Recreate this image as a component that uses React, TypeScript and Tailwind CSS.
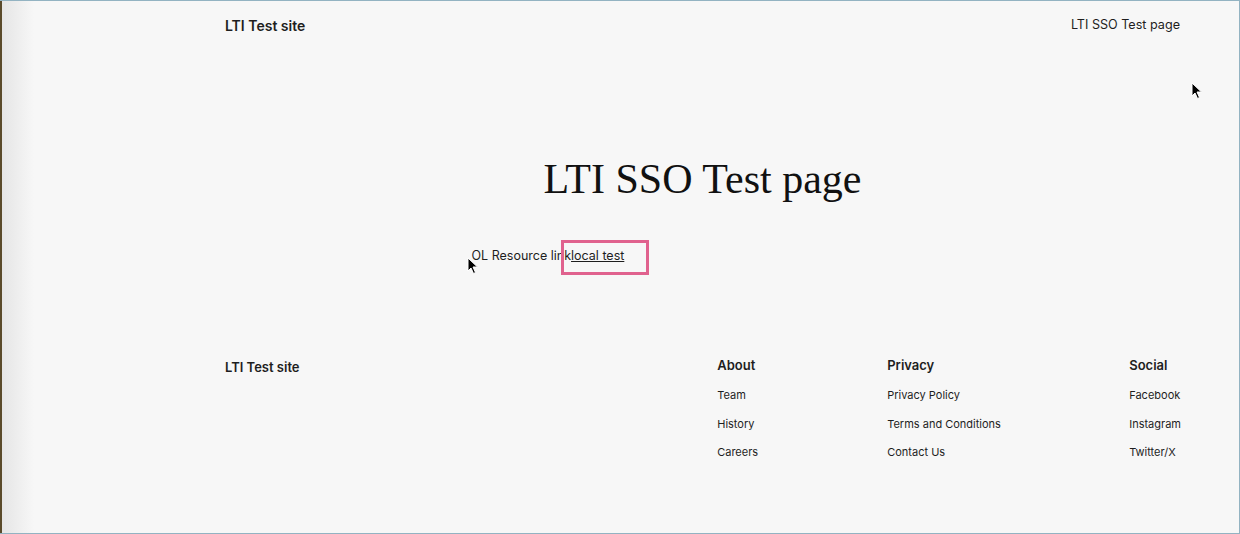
import React from "react";

// Footer link groups
const footerColumns = [
  { title: "About", links: ["Team", "History", "Careers"], width: "w-[170px]" },
  { title: "Privacy", links: ["Privacy Policy", "Terms and Conditions", "Contact Us"], width: "w-[242px]" },
  { title: "Social", links: ["Facebook", "Instagram", "Twitter/X"], width: "w-auto" },
];

const Cursor: React.FC<{ className: string }> = ({ className }) => (
  <svg className={className} width="12" height="18" viewBox="0 0 12 18">
    <path d="M1 1 L1 14 L4 11 L6.5 16.5 L8.5 15.5 L6 10 L10.5 10 Z" fill="#000" stroke="#fff" strokeWidth="1" />
  </svg>
);

const App: React.FC = () => {
  return (
    <div className="relative h-[534px] w-[1240px] overflow-hidden border-t border-r border-b border-[#93b3c2] bg-[#f7f7f7] font-['Inter',sans-serif] text-[#1e1e1e]">
      {/* left window edge shadow */}
      <div className="absolute left-0 top-0 h-full w-[34px] bg-gradient-to-r from-[#e4e4e4] to-[#f7f7f7]" />
      <div className="absolute left-0 top-0 h-full w-[2px] bg-[#5a4a2a]" />

      <div className="relative flex h-full flex-col pl-[227px] pr-[59px]">
        {/* header */}
        <header className="-ml-[2px] flex h-[48px] items-center justify-between">
          <span className="text-[14px] font-semibold">LTI Test site</span>
          <span className="text-[12.6px]">LTI SSO Test page</span>
        </header>

        {/* main */}
        <main className="-ml-[2px] flex flex-col items-center">
          <h1 className="mt-[105px] font-['Liberation_Serif',serif] text-[42px] leading-[50px] text-[#111]">
            LTI SSO Test page
          </h1>
          <div className="mt-[43px] w-[462px] text-[12.5px]">
            <p>
              OL Resource link<a href="#" className="underline">local test</a>
            </p>
          </div>
        </main>

        {/* footer */}
        <footer className="mt-[90px] flex items-start justify-between">
          <span className="-ml-[2px] mt-[2px] text-[13px] font-semibold">LTI Test site</span>
          <div className="-mr-[1px] flex">
            {footerColumns.map((col) => (
              <div key={col.title} className={col.width}>
                <div className="text-[13px] font-semibold">{col.title}</div>
                <ul className="mt-[12px] flex flex-col gap-[12.5px] text-[11px]">
                  {col.links.map((link) => (
                    <li key={link} className="leading-[16px]">
                      {link}
                    </li>
                  ))}
                </ul>
              </div>
            ))}
          </div>
        </footer>
      </div>

      {/* highlight box around link */}
      <div className="absolute left-[561px] top-[239px] h-[35px] w-[88px] border-[3px] border-[#e0628e]" />
      <Cursor className="absolute left-[1191px] top-[81px]" />
      <Cursor className="absolute left-[467px] top-[256px]" />
    </div>
  );
};

export default App;
